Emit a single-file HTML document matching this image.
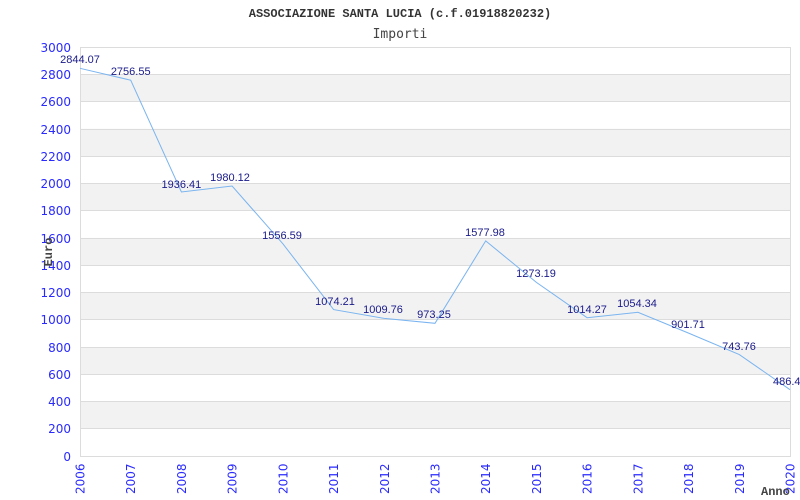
<!DOCTYPE html>
<html><head><meta charset="utf-8"><style>
html,body{margin:0;padding:0;background:#fff;width:800px;height:500px;overflow:hidden}
svg{display:block}
</style></head><body>
<svg width="800" height="500" xmlns="http://www.w3.org/2000/svg">
<text x="400" y="17" text-anchor="middle" font-family="Liberation Mono, monospace" font-weight="bold" font-size="12" fill="#333">ASSOCIAZIONE SANTA LUCIA (c.f.01918820232)</text>
<text x="400" y="38" text-anchor="middle" font-family="DejaVu Sans Mono, monospace" font-size="13" fill="#444">Importi</text>
<g id="bands" fill="#f2f2f2">
<rect x="80" y="74.3" width="710" height="27.3"/>
<rect x="80" y="128.8" width="710" height="27.3"/>
<rect x="80" y="183.3" width="710" height="27.3"/>
<rect x="80" y="237.9" width="710" height="27.3"/>
<rect x="80" y="292.4" width="710" height="27.3"/>
<rect x="80" y="347" width="710" height="27.3"/>
<rect x="80" y="401.5" width="710" height="27.3"/>
</g>
<g stroke="#dcdcdc" stroke-width="1">
<line x1="80" x2="790" y1="47.5" y2="47.5"/><line x1="80" x2="790" y1="74.5" y2="74.5"/><line x1="80" x2="790" y1="101.5" y2="101.5"/><line x1="80" x2="790" y1="129.5" y2="129.5"/><line x1="80" x2="790" y1="156.5" y2="156.5"/><line x1="80" x2="790" y1="183.5" y2="183.5"/><line x1="80" x2="790" y1="210.5" y2="210.5"/><line x1="80" x2="790" y1="238.5" y2="238.5"/><line x1="80" x2="790" y1="265.5" y2="265.5"/><line x1="80" x2="790" y1="292.5" y2="292.5"/><line x1="80" x2="790" y1="319.5" y2="319.5"/><line x1="80" x2="790" y1="347.5" y2="347.5"/><line x1="80" x2="790" y1="374.5" y2="374.5"/><line x1="80" x2="790" y1="401.5" y2="401.5"/><line x1="80" x2="790" y1="428.5" y2="428.5"/><line x1="80" x2="790" y1="456.5" y2="456.5"/>
<line x1="80.5" x2="80.5" y1="47" y2="457"/><line x1="790.5" x2="790.5" y1="47" y2="457"/>
</g>
<g font-family="DejaVu Sans, sans-serif" font-size="12" fill="#2a2aff" text-anchor="end">
<text x="71" y="52">3000</text><text x="71" y="79">2800</text><text x="71" y="106">2600</text><text x="71" y="134">2400</text><text x="71" y="161">2200</text><text x="71" y="188">2000</text><text x="71" y="215">1800</text><text x="71" y="243">1600</text><text x="71" y="270">1400</text><text x="71" y="297">1200</text><text x="71" y="324">1000</text><text x="71" y="352">800</text><text x="71" y="379">600</text><text x="71" y="406">400</text><text x="71" y="433">200</text><text x="71" y="461">0</text>
</g>
<text transform="translate(52,252) rotate(-90)" text-anchor="middle" font-family="Liberation Mono, monospace" font-weight="bold" font-size="12" fill="#444">Euro</text>
<g font-family="DejaVu Sans, sans-serif" font-size="12" fill="#2a2aff" text-anchor="start">
<text transform="translate(84.5,494) rotate(-90)">2006</text>
<text transform="translate(135.2,494) rotate(-90)">2007</text>
<text transform="translate(185.9,494) rotate(-90)">2008</text>
<text transform="translate(236.6,494) rotate(-90)">2009</text>
<text transform="translate(287.4,494) rotate(-90)">2010</text>
<text transform="translate(338.1,494) rotate(-90)">2011</text>
<text transform="translate(388.8,494) rotate(-90)">2012</text>
<text transform="translate(439.5,494) rotate(-90)">2013</text>
<text transform="translate(490.2,494) rotate(-90)">2014</text>
<text transform="translate(540.9,494) rotate(-90)">2015</text>
<text transform="translate(591.6,494) rotate(-90)">2016</text>
<text transform="translate(642.4,494) rotate(-90)">2017</text>
<text transform="translate(693.1,494) rotate(-90)">2018</text>
<text transform="translate(743.8,494) rotate(-90)">2019</text>
<text transform="translate(794.5,494) rotate(-90)">2020</text>
</g>
<text x="761" y="495" font-family="Liberation Mono, monospace" font-weight="bold" font-size="12" fill="#444">Anno</text>
<polyline fill="none" stroke="#7ab4f0" stroke-width="1" points="80,68.3 130.7,80.2 181.4,192 232.1,186 282.9,243.8 333.6,309.6 384.3,318.4 435,323.3 485.7,240.9 536.4,282.4 587.1,317.7 637.9,312.3 688.6,333.1 739.3,354.6 790,389.7"/>
<g font-family="Liberation Sans, sans-serif" font-size="11" fill="#1a1a8a" text-anchor="middle">
<text x="80" y="63">2844.07</text>
<text x="130.7" y="75">2756.55</text>
<text x="181.4" y="188">1936.41</text>
<text x="230" y="181">1980.12</text>
<text x="282" y="239">1556.59</text>
<text x="335" y="305">1074.21</text>
<text x="383" y="313">1009.76</text>
<text x="434" y="318">973.25</text>
<text x="485" y="236">1577.98</text>
<text x="536" y="277">1273.19</text>
<text x="587" y="313">1014.27</text>
<text x="637" y="307">1054.34</text>
<text x="688" y="328">901.71</text>
<text x="739" y="350">743.76</text>
<text x="773" y="385" text-anchor="start">486.4</text>
</g>
</svg>
</body></html>
